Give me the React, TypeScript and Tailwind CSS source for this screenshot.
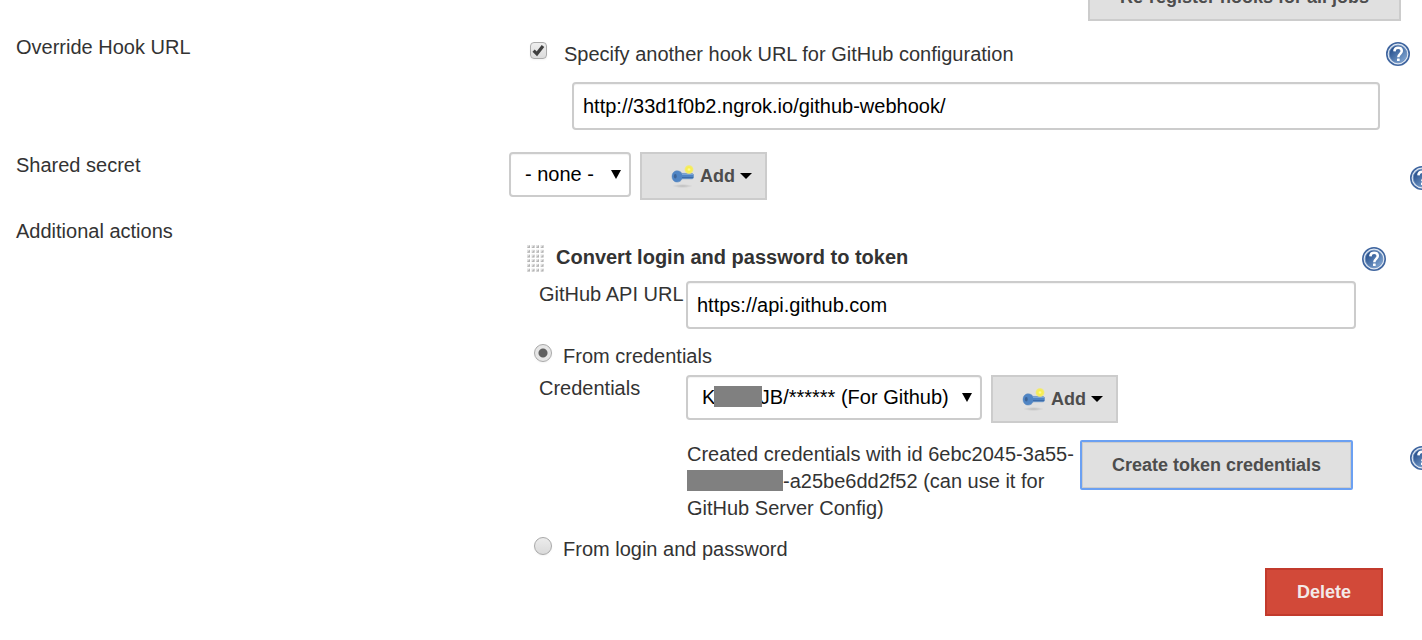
import { useId, useState } from "react";
import type { ReactNode } from "react";

function HelpButton({ label }: { label: string }) {
  const id = useId();
  return (
    <button type="button" aria-label={label} className="size-6 shrink-0">
      <svg viewBox="0 0 24 24" className="size-6">
        <defs>
          <linearGradient id={id} x1="0" y1="0" x2="1" y2="1">
            <stop offset="0.2" stopColor="#2c5591" />
            <stop offset="1" stopColor="#8db2dc" />
          </linearGradient>
        </defs>
        <circle cx="12" cy="12" r="11.2" fill="#dfe8f3" stroke="#3f659f" strokeWidth="1.6" />
        <circle cx="12" cy="12" r="8.8" fill={`url(#${id})`} stroke="#6a8dbd" strokeWidth="0.8" />
        <path
          d="M8.400 9.400C8.500 7 9.900 5.800 12.100 5.800c2.200 0 3.700 1.200 3.700 3.200 0 2.700-3.500 3-3.500 6.200"
          fill="none"
          stroke="#fff"
          strokeWidth="2.500"
        />
        <rect x="11" y="16.600" width="2.700" height="2.500" rx="0.500" fill="#fff" />
      </svg>
    </button>
  );
}

function KeyIcon() {
  const id = useId();
  return (
    <svg viewBox="0 0 24 24" className="size-6 shrink-0" aria-hidden="true">
      <defs>
        <radialGradient id={id}>
          <stop offset="0" stopColor="#fffbb0" />
          <stop offset="0.4" stopColor="#f8ee48" />
          <stop offset="0.75" stopColor="#f2ea70" />
          <stop offset="1" stopColor="#f0e890" stopOpacity="0" />
        </radialGradient>
        <radialGradient id={`${id}s`}>
          <stop offset="0" stopColor="#000" stopOpacity="0.16" />
          <stop offset="1" stopColor="#000" stopOpacity="0" />
        </radialGradient>
      </defs>
      <ellipse cx="11.500" cy="22" rx="10.500" ry="2" fill={`url(#${id}s)`} />
      <path
        d="M6 6.800c2.500 0 3.900 1 4.900 2.600h10.300l1.300 1v3.600l-1.300.8h-10.200c-.7 2-2.500 3.300-5 3.300C3 18.100 1 15.500 1 12.500S3 6.800 6 6.800z"
        fill="#5085c4"
        stroke="#5a88bf"
        strokeWidth="0.500"
      />
      <path d="M11 10.500h11" stroke="#7ba5d8" strokeWidth="1" />
      <path d="M11 13.600h11" stroke="#3b69a6" strokeWidth="1" />
      <ellipse cx="4.300" cy="12.300" rx="1.400" ry="2.200" fill="#3d6497" />
      <circle cx="18" cy="5.500" r="5" fill={`url(#${id})`} />
    </svg>
  );
}

function AddButton() {
  return (
    <button
      type="button"
      className="flex h-12 shrink-0 items-center border-2 border-[#ccc] bg-[#e0e0e0] pr-[13px] pl-[29px] text-lg font-bold text-[#4d4d4d]"
    >
      <KeyIcon />
      <span className="ml-[5px]">Add</span>
      <svg viewBox="0 0 12 6" className="ml-[5px] h-1.5 w-3" aria-hidden="true">
        <path d="M0 0h12L6 6z" fill="#000" />
      </svg>
    </button>
  );
}

function SelectBox({ id, option, width, children }: { id: string; option: string; width: string; children?: ReactNode }) {
  return (
    <div className={`relative shrink-0 ${width}`}>
      <select
        id={id}
        className="h-[45px] w-full appearance-none rounded-sm border-2 border-[#ccc] bg-white pl-3.5 text-black inset-shadow-xs"
      >
        <option>{option}</option>
      </select>
      {children}
      <svg viewBox="0 0 10 9" className="pointer-events-none absolute top-[18px] right-2.5 h-[9px] w-2.5" aria-hidden="true">
        <path d="M0 0h10L5 9z" fill="#000" />
      </svg>
    </div>
  );
}

function RadioRow({ label, checked, onSelect }: { label: string; checked: boolean; onSelect: () => void }) {
  return (
    <label className="flex items-start gap-[11px] pl-1.5">
      <input
        type="radio"
        name="source"
        checked={checked}
        onChange={onSelect}
        className="mt-px size-[18px] shrink-0 appearance-none rounded-full border border-[#a8a8a8] bg-linear-to-b from-[#ececec] to-[#dadada] shadow-xs checked:bg-[radial-gradient(circle,#606060_4px,#e6e6e6_5px)]"
      />
      <span>{label}</span>
    </label>
  );
}

const textInput =
  "h-12 min-w-0 flex-1 rounded-sm border-2 border-[#ccc] bg-white px-[9px] text-black inset-shadow-xs";
const labelColumn = "w-[493px] shrink-0";

export default function App() {
  const [override, setOverride] = useState(true);
  const [source, setSource] = useState("credentials");

  return (
    <main className="w-full overflow-hidden bg-white pb-6 pl-4 font-['Liberation_Sans',Arial,sans-serif] text-[20px] leading-[27px] text-[#333]">
      <div className="flex h-[21px] items-end justify-end overflow-hidden pr-[21px]">
        <button
          type="button"
          className="h-12 shrink-0 border-2 border-[#ccc] bg-[#e0e0e0] px-[30px] text-lg font-bold text-[#4d4d4d]"
        >
          Re-register hooks for all jobs
        </button>
      </div>

      <section className="flex pt-[13px]">
        <h2 className={labelColumn}>Override Hook URL</h2>
        <div className="min-w-0 flex-1 pt-[7px] pl-[21px]">
          <div className="flex items-start justify-between pr-3">
            <label className="flex items-start gap-[17px]">
              <span className="relative mt-px size-[17px] shrink-0">
                <input
                  type="checkbox"
                  checked={override}
                  onChange={(e) => setOverride(e.target.checked)}
                  className="block size-[17px] appearance-none rounded-sm border border-[#ababab] bg-linear-to-b from-[#eee] to-[#dcdcdc] shadow-xs"
                />
                {override && (
                  <svg viewBox="0 0 17 17" className="pointer-events-none absolute inset-0 size-[17px]" aria-hidden="true">
                    <path d="M3.600 8.600l3.300 3.200L13 4" fill="none" stroke="#404040" strokeWidth="3.200" />
                  </svg>
                )}
              </span>
              <span>Specify another hook URL for GitHub configuration</span>
            </label>
            <div className="flex pt-px">
              <HelpButton label="Help for override hook URL" />
            </div>
          </div>
          <div className="mt-3.5 flex pr-[42px] pl-[42px]">
            <input aria-label="Hook URL" defaultValue="http://33d1f0b2.ngrok.io/github-webhook/" className={textInput} />
          </div>
        </div>
      </section>

      <section className="flex pt-[22px]">
        <label htmlFor="secret" className={labelColumn}>Shared secret</label>
        <div className="-mr-3 flex min-w-0 flex-1 items-start gap-[9px]">
          <SelectBox id="secret" option="- none -" width="w-[122px]" />
          <AddButton />
          <div className="ml-auto flex pt-3.5">
            <HelpButton label="Help for shared secret" />
          </div>
        </div>
      </section>

      <section className="flex pt-[18px]">
        <h2 className={labelColumn}>Additional actions</h2>
        <div className="min-w-0 flex-1 pt-[26px] pl-[18px]">
          <div className="flex items-start pr-9">
            <svg viewBox="0 0 17 27" className="mt-px h-[27px] w-[17px] shrink-0" aria-hidden="true">
              {[0, 1, 2, 3, 4, 5].map((row) =>
                [0, 1, 2, 3].map((col) => (
                  <g key={`${row}-${col}`} transform={`translate(${col * 4.5} ${row * 4.700})`}>
                    <path d="M0 0h3v3H0z" fill="#e2e2e2" />
                    <path d="M3 0v3H0z" fill="#b4b4b4" />
                  </g>
                )),
              )}
            </svg>
            <h3 className="ml-3 font-bold">Convert login and password to token</h3>
            <div className="ml-auto flex pt-[3px]">
              <HelpButton label="Help for converting login and password" />
            </div>
          </div>

          <div className="mt-[9px] flex pr-[66px] pl-3">
            <label htmlFor="api-url" className="w-[147px] shrink-0">GitHub API URL</label>
            <input id="api-url" defaultValue="https://api.github.com" className={textInput} />
          </div>

          <div className="mt-3.5 pl-px">
            <RadioRow label="From credentials" checked={source === "credentials"} onSelect={() => setSource("credentials")} />
          </div>

          <div className="mt-[5px] flex pl-3">
            <label htmlFor="credentials" className="w-[147px] shrink-0">Credentials</label>
            <div className="flex items-start gap-[9px]">
              <SelectBox
                id="credentials"
                option={"K\u00a0\u00a0\u00a0\u00a0\u00a0\u00a0\u00a0\u00a0JB/****** (For Github)"}
                width="w-[296px]"
              >
                <span className="pointer-events-none absolute top-[11px] left-7 h-[21px] w-12 bg-[#808080]" />
              </SelectBox>
              <AddButton />
            </div>
          </div>

          <div className="-mr-3 mt-[17px] flex items-start pl-40">
            <p className="w-[393px] shrink-0 pt-px">
              Created credentials with id 6ebc2045-3a55-
              <br />
              <span className="mb-1 inline-block h-[21px] w-24 bg-[#808080] align-middle" />
              -a25be6dd2f52 (can use it for
              <br />
              GitHub Server Config)
            </p>
            <button
              type="button"
              className="h-[50px] shrink-0 rounded-xs border-2 border-[#6ba0f2] bg-[#e0e0e0] px-[30px] text-lg font-bold text-[#4d4d4d] inset-ring inset-ring-[#ccc]"
            >
              Create token credentials
            </button>
            <div className="ml-auto flex pt-1.5">
              <HelpButton label="Help for token credentials" />
            </div>
          </div>

          <div className="mt-3.5 pl-px">
            <RadioRow label="From login and password" checked={source === "login"} onSelect={() => setSource("login")} />
          </div>

          <div className="mt-[5px] flex justify-end pr-[39px]">
            <button type="button" className="h-12 border-2 border-[#c23a2c] bg-[#d24939] px-[30px] text-lg font-bold text-[#f3e9e8]">
              Delete
            </button>
          </div>
        </div>
      </section>
    </main>
  );
}
